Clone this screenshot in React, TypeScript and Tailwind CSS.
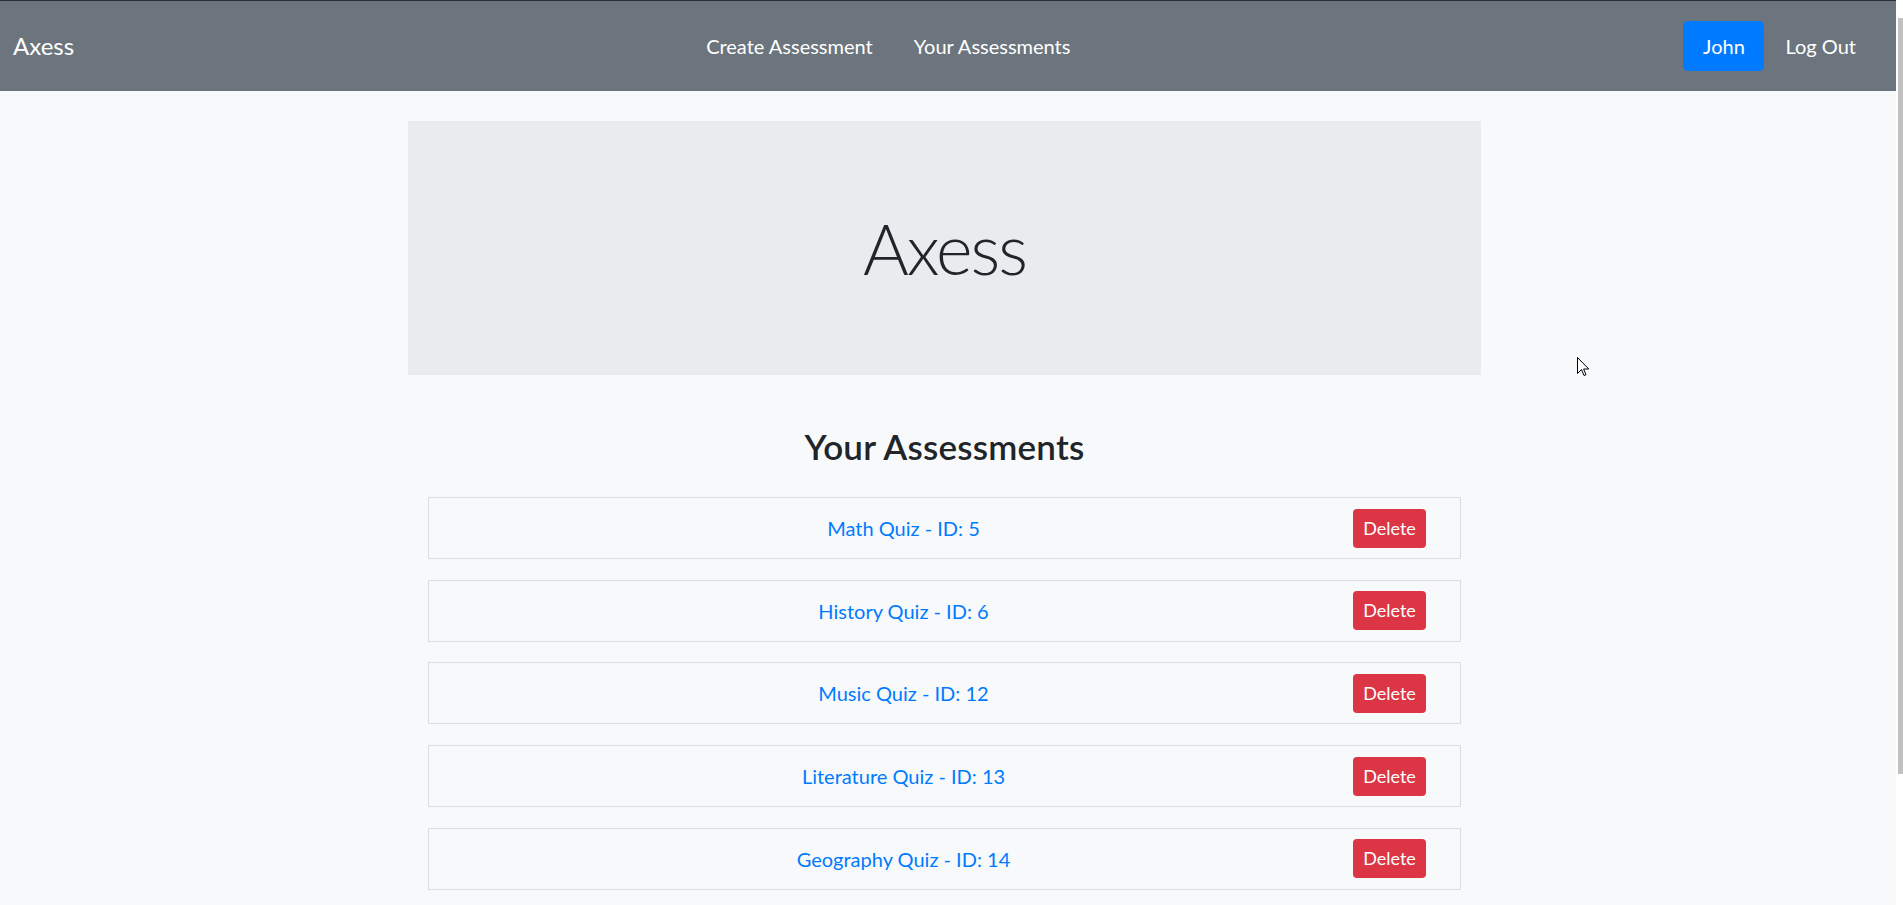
import React from "react";

const items = [
  "Math Quiz - ID: 5",
  "History Quiz - ID: 6",
  "Music Quiz - ID: 12",
  "Literature Quiz - ID: 13",
  "Geography Quiz - ID: 14",
];

export default function App() {
  return (
    <div className="relative flex h-[905px] w-full overflow-hidden bg-[#f8f9fa] font-['Lato','Liberation_Sans',sans-serif]">
      <div className="flex flex-1 flex-col">
        <nav className="flex h-[91px] items-center border-t border-[#2d3135] bg-[#6c757d] pl-[13px] pr-[40px]">
          <a className="text-[24px] leading-none text-white">Axess</a>
          <div className="mx-auto flex gap-[41px] pl-[19px] text-[20px] text-white">
            <a>Create Assessment</a>
            <a>Your Assessments</a>
          </div>
          <div className="flex items-center">
            <button className="h-[50px] w-[81px] rounded-[5px] bg-[#007bff] text-[20px] text-white">
              John
            </button>
            <a className="ml-[21px] text-[20px] text-white">Log Out</a>
          </div>
        </nav>

        <main className="ml-[408px] w-[1073px]">
          <div className="mt-[30px] flex h-[254px] items-center justify-center bg-[#e9ecef]">
            <h1 className="text-[70px] font-light leading-none tracking-[-2px] text-[#212529]">
              Axess
            </h1>
          </div>

          <h2 className="mt-[51px] text-center text-[35px] font-semibold leading-[40px] tracking-[0.2px] text-[#212529]">
            Your Assessments
          </h2>

          <ul className="mx-[20px] mt-[31px] flex flex-col gap-[20.7px]">
            {items.map((t) => (
              <li
                key={t}
                className="flex h-[62px] items-center border border-[#dcdddf] pl-[25px] pr-[34px]"
              >
                <a className="flex-1 text-center text-[20px] text-[#007bff]">{t}</a>
                <button className="h-[39px] w-[73px] rounded-[4px] bg-[#dc3545] text-[18px] text-white">
                  Delete
                </button>
              </li>
            ))}
          </ul>
        </main>
      </div>

      <div className="w-[7px] bg-white">
        <div className="ml-[2px] mt-[18px] h-[756px] w-[5px] bg-[#c1c1c1]" />
      </div>

      <svg
        className="absolute left-[1577px] top-[357px]"
        width="13"
        height="21"
        viewBox="0 0 13 21"
      >
        <path
          d="M0.5 0.5 L0.5 16.5 L4.5 12.5 L7 18.5 L9 17.7 L6.6 12 L11.8 12 Z"
          fill="white"
          stroke="black"
          strokeWidth="1"
          strokeLinejoin="miter"
        />
      </svg>
    </div>
  );
}
